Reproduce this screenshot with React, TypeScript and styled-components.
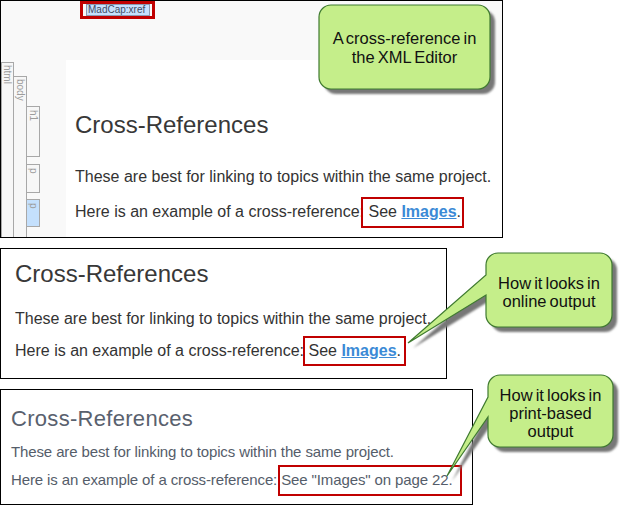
import React from "react";
import styled, { createGlobalStyle } from "styled-components";

const Global = createGlobalStyle`
  html, body { margin: 0; padding: 0; background: #fff; }
  body { font-family: "Liberation Sans", Arial, sans-serif; }
`;

const Page = styled.div`
  position: relative;
  width: 628px;
  height: 515px;
  overflow: hidden;
  background: #fff;
  font-family: "Liberation Sans", Arial, sans-serif;
`;

const Panel = styled.section<{ $w: number; $h: number; $mt?: number }>`
  box-sizing: border-box;
  width: ${(p) => p.$w}px;
  height: ${(p) => p.$h}px;
  margin-top: ${(p) => p.$mt ?? 0}px;
  border: 1px solid #000;
  overflow: hidden;
`;

/* ---------- XML editor panel ---------- */

const EditorPanel = styled(Panel)`
  display: grid;
  grid-template-rows: 59px 1fr;
  grid-template-columns: 65px 1fr;
  background: #f9f9f9;
`;

const StructureBar = styled.div`
  grid-column: 1 / span 2;
  display: flex;
  align-items: flex-start;
  padding-left: 79px;
`;

const TagAnnotation = styled.div`
  display: flex;
  border: 3px solid #c00000;
  padding: 0 2px 0 3px;
`;

const XmlTag = styled.div`
  box-sizing: border-box;
  width: 64px;
  height: 12px;
  border: 1px solid #8b9bb3;
  background: #c6e0fd;
  color: #3f4b63;
  font-size: 10px;
  line-height: 10px;
  padding-left: 1px;
  white-space: nowrap;
`;

const TabColumn = styled.div`
  display: flex;
  align-items: flex-start;
  height: 100%;
`;

const Tab = styled.div<{ $w: number; $mt?: number; $h?: number; $selected?: boolean; $open?: boolean; $pt?: number }>`
  box-sizing: border-box;
  width: ${(p) => p.$w}px;
  ${(p) => (p.$h ? `height: ${p.$h}px;` : "align-self: stretch;")}
  margin-top: ${(p) => p.$mt ?? 0}px;
  border: 1px solid #a8a8a8;
  ${(p) => (p.$open ? "border-bottom: none;" : "")}
  background: ${(p) => (p.$selected ? "#c4e0fd" : "#f7f7f7")};
  display: flex;
  flex-direction: column;
  align-items: center;
  padding-top: ${(p) => p.$pt ?? 2}px;
`;

const TabLabel = styled.span`
  writing-mode: vertical-rl;
  font-size: 10px;
  line-height: 11px;
  color: #9c9c9c;
`;

const NestedTab = styled(Tab)`
  margin-left: -1px;
`;

const ElementTabs = styled.div`
  display: flex;
  flex-direction: column;
  margin-left: -1px;
  margin-top: 46px;
`;

const EditorContent = styled.div`
  background: #fff;
  padding: 51px 0 0 9px;
`;

/* ---------- text ---------- */

const Heading = styled.h1<{ $size?: number; $lh?: number; $color?: string; $ls?: number }>`
  margin: 0;
  font-weight: normal;
  font-size: ${(p) => p.$size ?? 24}px;
  line-height: ${(p) => p.$lh ?? 28}px;
  letter-spacing: ${(p) => p.$ls ?? 0}px;
  color: ${(p) => p.$color ?? "#383838"};
  white-space: nowrap;
`;

const Para = styled.p<{ $mt: number; $size?: number; $lh?: number; $color?: string; $ls?: number }>`
  margin: ${(p) => p.$mt}px 0 0 0;
  font-size: ${(p) => p.$size ?? 16}px;
  line-height: ${(p) => p.$lh ?? 20}px;
  letter-spacing: ${(p) => p.$ls ?? 0}px;
  color: ${(p) => p.$color ?? "#333"};
  white-space: nowrap;
`;

const Marked = styled.span<{ $t: number; $r: number; $b: number; $l: number }>`
  position: relative;
  &::after {
    content: "";
    position: absolute;
    top: ${(p) => p.$t}px;
    right: ${(p) => p.$r}px;
    bottom: ${(p) => p.$b}px;
    left: ${(p) => p.$l}px;
    border: 2px solid #c00000;
    pointer-events: none;
  }
`;

const XrefLink = styled.a`
  color: #3b8ad6;
  font-weight: bold;
  text-decoration: underline;
`;

const ContentBlock = styled.div<{ $pt: number; $pl: number }>`
  padding: ${(p) => p.$pt}px 0 0 ${(p) => p.$pl}px;
`;

/* ---------- callouts ---------- */

const CalloutWrap = styled.div<{ $x: number; $y: number; $w: number; $h: number }>`
  position: absolute;
  left: ${(p) => p.$x}px;
  top: ${(p) => p.$y}px;
  width: ${(p) => p.$w}px;
  height: ${(p) => p.$h}px;
`;

const CalloutShape = styled.svg`
  position: absolute;
  left: 0;
  top: 0;
  overflow: visible;
`;

const CalloutText = styled.div<{ $lh: number; $pt: number }>`
  position: relative;
  box-sizing: border-box;
  height: 100%;
  display: flex;
  flex-direction: column;
  align-items: center;
  justify-content: center;
  padding-top: ${(p) => p.$pt}px;
  font-size: 16.5px;
  line-height: ${(p) => p.$lh}px;
  color: #111;
  text-align: center;
  word-spacing: -1.5px;
  white-space: nowrap;
`;

type Tail = { y1: number; y2: number; tx: number; ty: number };

function calloutPath(w: number, h: number, r: number, tail?: Tail) {
  let d = `M ${r} 0 H ${w - r} A ${r} ${r} 0 0 1 ${w} ${r} V ${h - r} A ${r} ${r} 0 0 1 ${w - r} ${h} H ${r} A ${r} ${r} 0 0 1 0 ${h - r}`;
  if (tail) {
    d += ` V ${tail.y2} L ${tail.tx} ${tail.ty} L 0 ${tail.y1}`;
  }
  d += ` V ${r} A ${r} ${r} 0 0 1 ${r} 0 Z`;
  return d;
}

function Callout({
  id,
  x,
  y,
  w,
  h,
  tail,
  lh,
  pt,
  lines,
}: {
  id: string;
  x: number;
  y: number;
  w: number;
  h: number;
  tail?: Tail;
  lh: number;
  pt: number;
  lines: string[];
}) {
  const d = calloutPath(w, h, 12, tail);
  return (
    <CalloutWrap $x={x} $y={y} $w={w} $h={h}>
      <CalloutShape width={w} height={h}>
        <defs>
          <filter id={id} x="-20%" y="-20%" width="140%" height="140%">
            <feGaussianBlur stdDeviation="0.8" />
          </filter>
        </defs>
        <path d={d} transform="translate(5 5)" fill="#777" filter={`url(#${id})`} />
        <path d={d} fill="#c5ee8a" stroke="#3f7a30" strokeWidth="1.2" />
      </CalloutShape>
      <CalloutText $lh={lh} $pt={pt}>
        {lines.map((l) => (
          <span key={l}>{l}</span>
        ))}
      </CalloutText>
    </CalloutWrap>
  );
}

export default function App() {
  return (
    <>
      <Global />
      <Page>
        <EditorPanel $w={503} $h={238}>
          <StructureBar>
            <TagAnnotation>
              <XmlTag>MadCap:xref</XmlTag>
            </TagAnnotation>
          </StructureBar>
          <TabColumn>
            <Tab $w={13} $mt={2} $open>
              <TabLabel>html</TabLabel>
            </Tab>
            <NestedTab $w={14} $mt={16} $open>
              <TabLabel>body</TabLabel>
            </NestedTab>
            <ElementTabs>
              <Tab $w={14} $h={51} $pt={3}>
                <TabLabel>h1</TabLabel>
              </Tab>
              <Tab $w={14} $h={29} $mt={7} $pt={3}>
                <TabLabel>p</TabLabel>
              </Tab>
              <Tab $w={14} $h={28} $mt={6} $pt={3} $selected>
                <TabLabel>p</TabLabel>
              </Tab>
            </ElementTabs>
          </TabColumn>
          <EditorContent>
            <Heading>Cross-References</Heading>
            <Para $mt={28}>These are best for linking to topics within the same project.</Para>
            <Para $mt={15}>
              Here is an example of a cross-reference:{" "}
              <Marked $t={-6} $r={-3} $b={-8} $l={-7}>
                See <XrefLink>Images</XrefLink>.
              </Marked>
            </Para>
          </EditorContent>
        </EditorPanel>

        <Panel $w={447} $h={131} $mt={10}>
          <ContentBlock $pt={11} $pl={14}>
            <Heading>Cross-References</Heading>
            <Para $mt={21}>These are best for linking to topics within the same project.</Para>
            <Para $mt={12}>
              Here is an example of a cross-reference:{" "}
              <Marked $t={-6} $r={-5} $b={-7} $l={-5}>
                See <XrefLink>Images</XrefLink>.
              </Marked>
            </Para>
          </ContentBlock>
        </Panel>

        <Panel $w={473} $h={116} $mt={10}>
          <ContentBlock $pt={16} $pl={10}>
            <Heading $size={22} $lh={26} $color="#59616e" $ls={0.3}>
              Cross-References
            </Heading>
            <Para $mt={11} $size={15} $lh={18} $color="#555d6a" $ls={-0.12}>
              These are best for linking to topics within the same project.
            </Para>
            <Para $mt={10} $size={15} $lh={18} $color="#555d6a" $ls={-0.12}>
              Here is an example of a cross-reference:{" "}
              <Marked $t={-6} $r={-10} $b={-8} $l={-3}>
                See "Images" on page 22.
              </Marked>
            </Para>
          </ContentBlock>
        </Panel>

        <Callout
          id="c1"
          x={319}
          y={5}
          w={171}
          h={84}
          lh={19}
          pt={2}
          lines={["A cross-reference in", "the XML Editor"]}
        />
        <Callout
          id="c2"
          x={486}
          y={253}
          w={126}
          h={74}
          lh={18}
          pt={4}
          tail={{ y1: 22, y2: 42, tx: -78, ty: 90 }}
          lines={["How it looks in", "online output"]}
        />
        <Callout
          id="c3"
          x={488}
          y={375}
          w={125}
          h={72}
          lh={18}
          pt={3}
          tail={{ y1: 22, y2: 42, tx: -41, ty: 101 }}
          lines={["How it looks in", "print-based", "output"]}
        />
      </Page>
    </>
  );
}
